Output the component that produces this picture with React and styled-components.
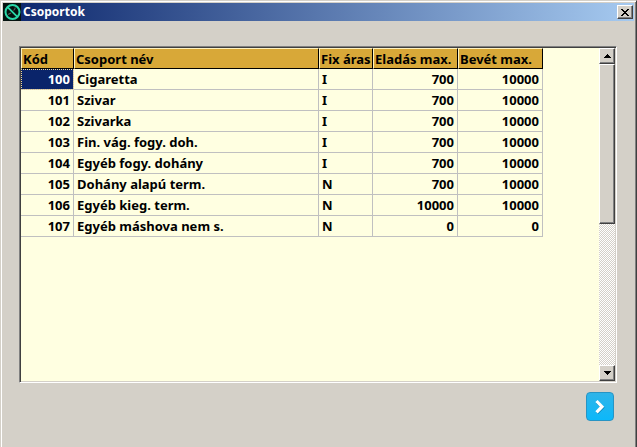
import React from "react";
import styled, { createGlobalStyle } from "styled-components";

const GlobalStyle = createGlobalStyle`
  *, *::before, *::after { box-sizing: border-box; }
  body { margin: 0; background: #d4d0c8; }
  body, button, table {
    font-family: "Noto Sans", "DejaVu Sans", sans-serif;
    font-size: 13px;
    font-weight: 700;
    line-height: 20px;
    color: #000;
  }
`;

const Window = styled.main`
  display: flex;
  flex-direction: column;
  min-height: 100vh;
  padding: 2px 1px 0;
  background: #d4d0c8;
  border-top: 1px solid #d4d0c8;
  border-left: 1px solid #d4d0c8;
  border-right: 1px solid #404040;
  box-shadow: inset 1px 1px 0 #fff, inset -1px 0 0 #808080;
`;

const TitleBar = styled.header`
  display: flex;
  align-items: center;
  gap: 2px;
  height: 18px;
  margin: 0 1px;
  padding: 0 1px 0 0;
  background: linear-gradient(90deg, #0a246a, #a6caf0);
`;

const Title = styled.h1`
  flex: 1;
  margin: 0;
  font-size: 12px;
  line-height: 18px;
  color: #fff;
`;

const ClassicButton = styled.button`
  display: flex;
  align-items: center;
  justify-content: center;
  flex: none;
  width: 16px;
  height: ${(p) => p.$height}px;
  padding: 0;
  background: #d4d0c8;
  border: 1px solid;
  border-color: #fff #404040 #404040 #fff;
  box-shadow: inset -1px -1px 0 #808080;
`;

const Content = styled.section`
  display: flex;
  flex: 1;
  flex-direction: column;
  padding: 25px 18px 24px 17px;
`;

const GridFrame = styled.div`
  display: flex;
  height: 337px;
  background: #ffffe1;
  border: 1px solid;
  border-color: #808080 #fff #fff #808080;
  box-shadow: inset 1px 1px 0 #404040, inset -1px -1px 0 #d4d0c8;
  padding: 1px;
`;

const GridBody = styled.div`
  flex: 1;
  min-width: 0;
  overflow: hidden;
`;

const Table = styled.table`
  width: 522px;
  table-layout: fixed;
  border-collapse: separate;
  border-spacing: 0;
`;

const Col = styled.col`
  width: ${(p) => p.$width}px;
`;

const HeadCell = styled.th`
  height: 21px;
  padding: 0 0 0 1px;
  overflow: hidden;
  white-space: nowrap;
  text-align: left;
  line-height: 18px;
  background: #d8a838;
  border: 1px solid;
  border-color: #fff2c0 #000 #000 #fff2c0;
`;

const Cell = styled.td`
  height: 21px;
  padding: 0 3px;
  white-space: nowrap;
  text-align: ${(p) => (p.$numeric ? "right" : "left")};
  border-right: 1px solid #c0c0c0;
  border-bottom: 1px solid #c0c0c0;
  ${(p) =>
    p.$selected &&
    `
    color: #fff;
    background: #0a246a;
    background-clip: padding-box;
    outline: 1px dotted #f5db95;
    outline-offset: -1px;
  `}
`;

const ScrollBar = styled.div`
  display: flex;
  flex: none;
  flex-direction: column;
  width: 16px;
  background: repeating-conic-gradient(#fff 0 25%, #d4d0c8 0 50%) 0 0 / 2px 2px;
`;

const ScrollTrack = styled.div`
  flex: 1;
`;

const ScrollThumb = styled.div`
  height: 53%;
  background: #d4d0c8;
  border: 1px solid;
  border-color: #fff #404040 #404040 #fff;
  box-shadow: inset -1px -1px 0 #808080;
`;

const Actions = styled.footer`
  display: flex;
  justify-content: flex-end;
  padding: 9px 3px 0;
`;

const NextButton = styled.button`
  display: flex;
  align-items: center;
  justify-content: center;
  width: 28px;
  height: 29px;
  padding: 0;
  background: linear-gradient(#30b4e8, #0cb8fa);
  border: 1px solid #2794c4;
  border-radius: 4px;
`;

const columns = [
  { key: "code", label: "Kód", width: 53, numeric: true },
  { key: "name", label: "Csoport név", width: 245 },
  { key: "fixed", label: "Fix áras", width: 54 },
  { key: "sell", label: "Eladás max.", width: 85, numeric: true },
  { key: "buy", label: "Bevét max.", width: 85, numeric: true },
];

const groups = [
  { code: 100, name: "Cigaretta", fixed: "I", sell: 700, buy: 10000 },
  { code: 101, name: "Szivar", fixed: "I", sell: 700, buy: 10000 },
  { code: 102, name: "Szivarka", fixed: "I", sell: 700, buy: 10000 },
  { code: 103, name: "Fin. vág. fogy. doh.", fixed: "I", sell: 700, buy: 10000 },
  { code: 104, name: "Egyéb fogy. dohány", fixed: "I", sell: 700, buy: 10000 },
  { code: 105, name: "Dohány alapú term.", fixed: "N", sell: 700, buy: 10000 },
  { code: 106, name: "Egyéb kieg. term.", fixed: "N", sell: 10000, buy: 10000 },
  { code: 107, name: "Egyéb máshova nem s.", fixed: "N", sell: 0, buy: 0 },
];

function NoSmokingIcon() {
  return (
    <svg width="18" height="18" viewBox="0 0 18 18" aria-hidden="true">
      <rect width="18" height="18" fill="#04120f" />
      <path d="M5 11.5 8 10M10.5 7.5q2-1 1.5-3" stroke="#56645c" strokeWidth="1.2" fill="none" />
      <circle cx="9.5" cy="9" r="7" fill="none" stroke="#2ad8a8" strokeWidth="2" />
      <path d="M4.6 4.1 14.4 13.9" stroke="#2ad8a8" strokeWidth="1.8" />
    </svg>
  );
}

function CloseIcon() {
  return (
    <svg width="8" height="7" viewBox="0 0 8 7" shapeRendering="crispEdges" aria-hidden="true">
      <path d="M0 0h2v1h1v1h2V1h1V0h2v1H7v1H6v1H5v1h1v1h1v1h1v1H6V6H5V5H3v1H2v1H0V6h1V5h1V4h1V3H2V2H1V1H0z" />
    </svg>
  );
}

function Arrow({ down }) {
  return (
    <svg width="7" height="4" viewBox="0 0 7 4" shapeRendering="crispEdges" aria-hidden="true">
      <path d={down ? "M0 0h7v1H6v1H5v1H4v1H3V3H2V2H1V1H0z" : "M3 0h1v1h1v1h1v1h1v1H0V3h1V2h1V1h1z"} />
    </svg>
  );
}

function ChevronIcon() {
  return (
    <svg width="12" height="16" viewBox="0 0 12 16" fill="none" aria-hidden="true">
      <path d="m3 3 5.5 5.5L3 14" stroke="#087caf" strokeWidth="3" />
      <path d="m2.5 2 5.5 5.7-5.5 5.7" stroke="#fff" strokeWidth="3.2" />
    </svg>
  );
}

export default function App() {
  return (
    <>
      <GlobalStyle />
      <Window>
        <TitleBar>
          <NoSmokingIcon />
          <Title>Csoportok</Title>
          <ClassicButton type="button" $height={14} aria-label="Bezárás">
            <CloseIcon />
          </ClassicButton>
        </TitleBar>
        <Content>
          <GridFrame>
            <GridBody>
              <Table>
                <colgroup>
                  {columns.map((c) => (
                    <Col key={c.key} $width={c.width} />
                  ))}
                </colgroup>
                <thead>
                  <tr>
                    {columns.map((c) => (
                      <HeadCell key={c.key} scope="col">{c.label}</HeadCell>
                    ))}
                  </tr>
                </thead>
                <tbody>
                  {groups.map((g, row) => (
                    <tr key={g.code}>
                      {columns.map((c, col) => (
                        <Cell key={c.key} $numeric={c.numeric} $selected={row === 0 && col === 0}>
                          {g[c.key]}
                        </Cell>
                      ))}
                    </tr>
                  ))}
                </tbody>
              </Table>
            </GridBody>
            <ScrollBar>
              <ClassicButton type="button" $height={16} aria-label="Fel">
                <Arrow />
              </ClassicButton>
              <ScrollTrack>
                <ScrollThumb />
              </ScrollTrack>
              <ClassicButton type="button" $height={16} aria-label="Le">
                <Arrow down />
              </ClassicButton>
            </ScrollBar>
          </GridFrame>
          <Actions>
            <NextButton type="button" aria-label="Tovább">
              <ChevronIcon />
            </NextButton>
          </Actions>
        </Content>
      </Window>
    </>
  );
}
